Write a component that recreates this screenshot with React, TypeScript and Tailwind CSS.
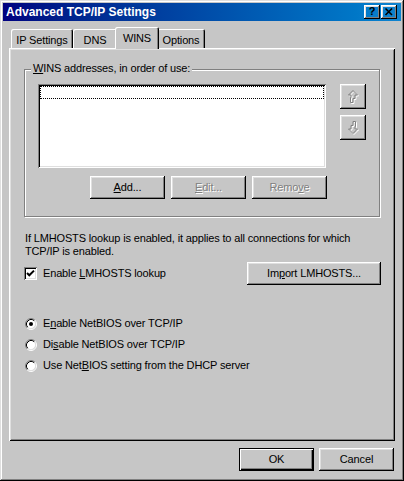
import React from "react";

const raised =
  "shadow-[inset_-1px_-1px_#000,inset_1px_1px_#fff,inset_-2px_-2px_#808080,inset_2px_2px_#dfdfdf]";
const sunken =
  "shadow-[inset_1px_1px_#808080,inset_-1px_-1px_#fff,inset_2px_2px_#000,inset_-2px_-2px_#dfdfdf]";
const dim = "text-[#808080] [text-shadow:1px_1px_0_#fff]";

function Button({
  className = "",
  off = false,
  children,
}: {
  className?: string;
  off?: boolean;
  children: React.ReactNode;
}) {
  return (
    <div
      className={`flex h-[23px] items-center justify-center ${raised} ${off ? dim : ""} ${className}`}
    >
      {children}
    </div>
  );
}

function Tab({ label, className, active = false }: { label: React.ReactNode; className: string; active?: boolean }) {
  if (active) {
    return (
      <div
        className={`relative z-10 -mx-[2px] mb-[-1px] flex h-[22px] justify-center rounded-t-[2px] bg-[#c6c6c6] pt-[5px] shadow-[inset_1px_1px_#fff,inset_-1px_0_#000,inset_-2px_0_#808080] ${className}`}
      >
        {label}
      </div>
    );
  }
  return (
    <div
      className={`flex h-[19px] justify-center rounded-t-[2px] pt-[5px] shadow-[inset_1px_1px_#fff,inset_-1px_0_#000,inset_-2px_0_#808080] ${className}`}
    >
      {label}
    </div>
  );
}

function Arrow({ down = false }: { down?: boolean }) {
  const pts = "6,1.5 10.5,6 8,6 8,9.5 6,9.5 6,13.5 3.5,13.5 3.5,8.5 4,8.5 4,6 1.5,6";
  return (
    <svg width="12" height="15" viewBox="0 0 12 15" className={down ? "rotate-180" : ""}>
      <polygon points={pts} fill="none" stroke="#fff" transform={down ? "translate(-1,-1)" : "translate(1,1)"} />
      <polygon points={pts} fill="none" stroke="#808080" />
    </svg>
  );
}

function Radio({ on = false }: { on?: boolean }) {
  return (
    <svg width="12" height="12" viewBox="0 0 12 12">
      <circle cx="6" cy="6" r="4.5" fill="#fff" />
      <path d="M9.89 2.11 A5.5 5.5 0 0 0 2.11 9.89" fill="none" stroke="#808080" />
      <path d="M9.89 2.11 A5.5 5.5 0 0 1 2.11 9.89" fill="none" stroke="#fff" />
      <path d="M9.18 2.82 A4.5 4.5 0 0 0 2.82 9.18" fill="none" stroke="#000" />
      <path d="M9.18 2.82 A4.5 4.5 0 0 1 2.82 9.18" fill="none" stroke="#dfdfdf" />
      {on && <circle cx="6" cy="6" r="2" fill="#000" />}
    </svg>
  );
}

export default function App() {
  return (
    <div className="h-[481px] w-[404px] bg-[#c6c6c6] p-[3px] font-['Liberation_Sans',Arial,sans-serif] text-[11px] leading-[13px] tracking-[-0.15px] text-black shadow-[inset_-1px_-1px_#000,inset_1px_1px_#dfdfdf,inset_-2px_-2px_#808080,inset_2px_2px_#fff]">
      {/* title bar */}
      <div className="flex h-[18px] w-[398px] items-center bg-gradient-to-r from-[#000080] to-[#1084d0] pl-[3px] pr-[4px]">
        <span className="flex-1 text-[12px] font-bold tracking-normal text-white">Advanced TCP/IP Settings</span>
        <div className="flex gap-[1px]">
          <div className={`flex h-[14px] w-[16px] items-center justify-center pb-[1px] text-[11px] font-bold ${raised}`}>?</div>
          <div className={`flex h-[14px] w-[16px] items-center justify-center ${raised}`}>
            <svg width="16" height="14" viewBox="0 0 16 14">
              <path d="M4.5 3.5 L11 10 M11 3.5 L4.5 10" stroke="#000" strokeWidth="1.6" />
            </svg>
          </div>
        </div>
      </div>

      {/* tabs */}
      <div className="ml-[8px] mt-[6px] flex h-[21px] items-end">
        <Tab label="IP Settings" className="w-[62px]" />
        <Tab label="DNS" className="w-[44px]" />
        <Tab label="WINS" className="w-[44px]" active />
        <Tab label="Options" className="w-[48px]" />
      </div>

      {/* panel */}
      <div className="ml-[6px] h-[393px] w-[386px] pl-[15px] pt-[21px] shadow-[inset_1px_1px_#fff,inset_-1px_-1px_#000,inset_2px_2px_#dfdfdf,inset_-2px_-2px_#808080]">
        <div className="relative h-[148px] w-[356px] border border-[#808080] pl-[13px] pt-[14px] shadow-[1px_1px_0_#fff,inset_1px_1px_0_#fff]">
          <span className="absolute left-[6px] top-[-8px] bg-[#c6c6c6] px-[2px]">
            <u>W</u>INS addresses, in order of use:
          </span>
          <div className="flex">
            <div className={`h-[84px] w-[288px] bg-white p-[2px] ${sunken}`}>
              <div className="h-[13px] border border-dotted border-black" />
            </div>
            <div className="ml-[14px] flex flex-col gap-[6px]">
              <Button className="h-[25px] w-[26px]">
                <Arrow />
              </Button>
              <Button className="h-[25px] w-[26px]">
                <Arrow down />
              </Button>
            </div>
          </div>
          <div className="ml-[52px] mt-[8px] flex gap-[6px]">
            <Button className="w-[75px]">
              <u>A</u>dd...
            </Button>
            <Button className="w-[75px]" off>
              <u>E</u>dit...
            </Button>
            <Button className="w-[75px]" off>
              Remo<u>v</u>e
            </Button>
          </div>
        </div>

        <p className="mt-[15px] w-[356px] pl-[1px]">
          If LMHOSTS lookup is enabled, it applies to all connections for which TCP/IP is enabled.
        </p>

        <div className="mt-[4px] flex h-[23px] w-[357px] items-center justify-between">
          <div className="flex items-center">
            <div className={`flex h-[13px] w-[13px] items-center justify-center bg-white ${sunken}`}>
              <svg width="9" height="9" viewBox="0 0 9 9">
                <path d="M1 4 L3.3 6.3 L8 1.6" fill="none" stroke="#000" strokeWidth="2" />
              </svg>
            </div>
            <span className="ml-[6px]">
              Enable <u>L</u>MHOSTS lookup
            </span>
          </div>
          <Button className="w-[134px]">
            Im<u>p</u>ort LMHOSTS...
          </Button>
        </div>

        <div className="mt-[28px] flex flex-col pl-[1px]">
          <div className="flex h-[21px] items-center gap-[6px]">
            <Radio on />
            <span>
              E<u>n</u>able NetBIOS over TCP/IP
            </span>
          </div>
          <div className="flex h-[21px] items-center gap-[6px]">
            <Radio />
            <span>
              Di<u>s</u>able NetBIOS over TCP/IP
            </span>
          </div>
          <div className="flex h-[21px] items-center gap-[6px]">
            <Radio />
            <span>
              Use Net<u>B</u>IOS setting from the DHCP server
            </span>
          </div>
        </div>
      </div>

      {/* dialog buttons */}
      <div className="mt-[7px] flex justify-end gap-[5px] pr-[7px]">
        <div className="flex h-[23px] w-[75px] items-center justify-center border border-black shadow-[inset_1px_1px_#fff,inset_-1px_-1px_#000,inset_-2px_-2px_#808080]">
          OK
        </div>
        <Button className="w-[75px]">Cancel</Button>
      </div>
    </div>
  );
}
